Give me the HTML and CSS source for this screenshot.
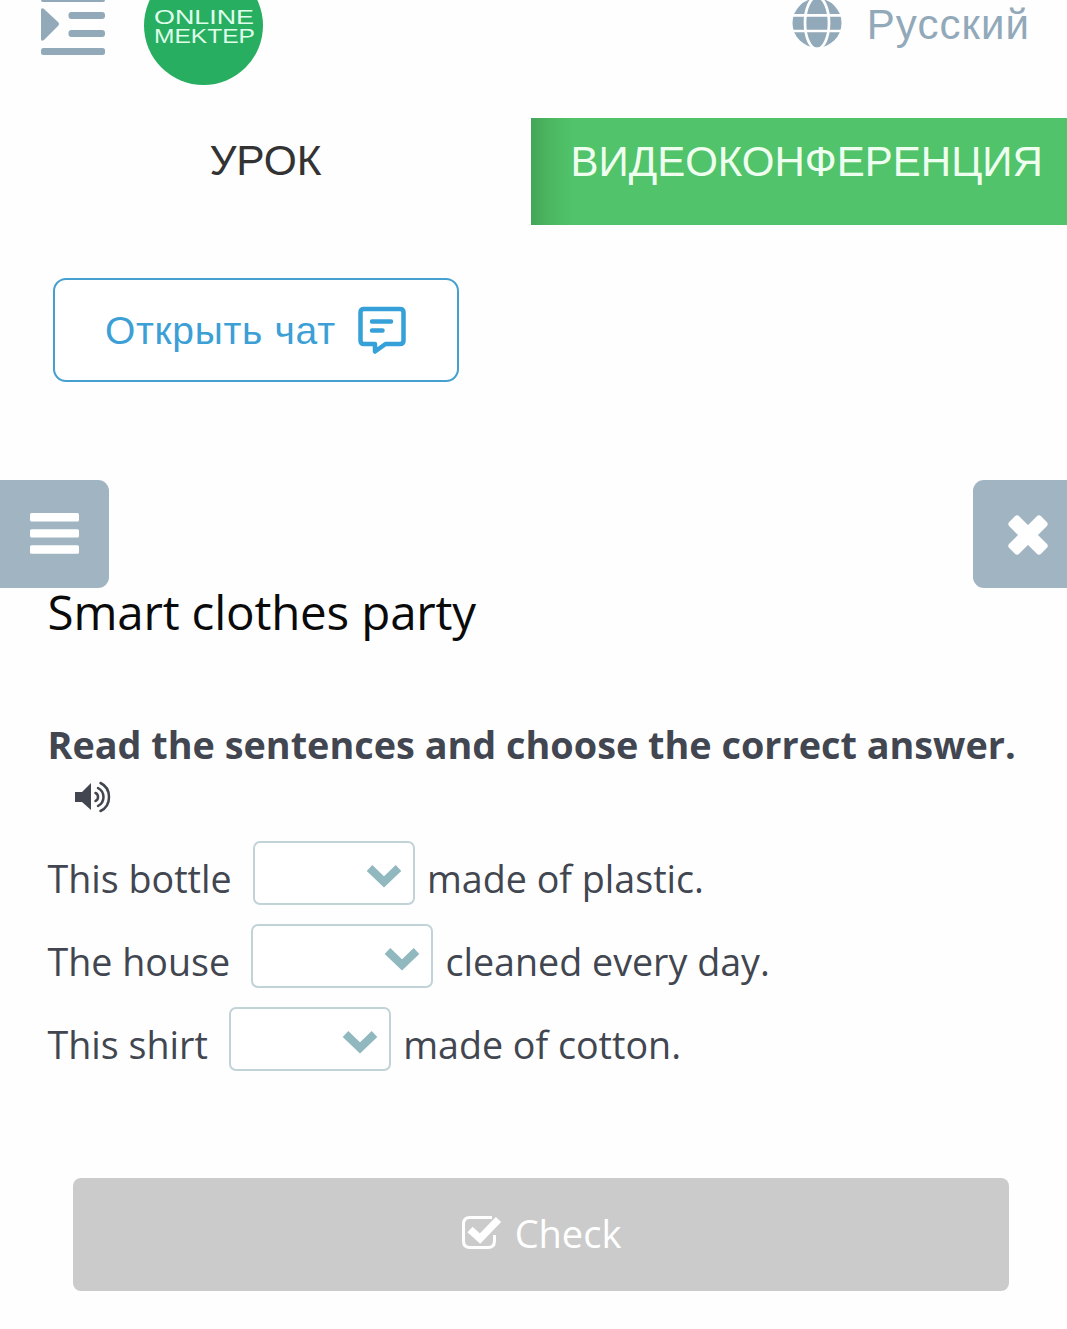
FILE: index.html
```html
<!DOCTYPE html>
<html lang="ru">
<head>
<meta charset="utf-8">
<title>Online Mektep</title>
<link rel="stylesheet" href="styles.css">
</head>
<body>
<header class="header">
  <svg class="indent-icon" width="66" height="56" viewBox="0 0 66 56" fill="#91a9b9">
    <rect x="1" y="-5" width="64" height="7" rx="2"/>
    <path d="M1 10Q1 7 4 9L18 22Q20 24 18 26L4 40Q1 42 1 39Z"/>
    <rect x="28.500" y="12" width="36.500" height="7" rx="3"/>
    <rect x="28.500" y="30" width="36.500" height="7" rx="3"/>
    <rect x="1" y="48" width="64" height="7" rx="2.500"/>
  </svg>
  <svg class="logo" width="120" height="86" viewBox="0 0 120 86">
    <circle cx="59.500" cy="25.500" r="59.500" fill="#28ae60"/>
    <g class="logo-text" fill="#dfffeb">
      <text x="10" y="23.500" textLength="100" lengthAdjust="spacingAndGlyphs">ONLINE</text>
      <text x="10" y="43" textLength="101" lengthAdjust="spacingAndGlyphs">MEKTEP</text>
    </g>
  </svg>
  <div class="language">
    <svg width="50" height="48" viewBox="0 0 50 48">
      <circle cx="25" cy="23" r="24.500" fill="#91a9b9"/>
      <g fill="none" stroke="#fff" stroke-width="2.700">
        <path d="M0 15.300H50M0 31H50"/>
        <ellipse cx="25" cy="23" rx="12" ry="26"/>
      </g>
    </svg>
    <span class="language-name">Русский</span>
  </div>
</header>
<nav class="tabs">
  <a class="tab"><span class="lesson">УРОК</span></a>
  <a class="tab tab-video"><span class="video">ВИДЕОКОНФЕРЕНЦИЯ</span></a>
</nav>
<button class="chat">
  <span class="chat-label">Открыть чат</span>
  <svg width="48" height="48" viewBox="0 0 48 48" fill="none" stroke="#36a0d8" stroke-width="4.500" stroke-linejoin="round" stroke-linecap="round">
    <path d="M6 3H42Q45.500 3 45.500 6.500V34.500Q45.500 38 42 38H27.500L17 45.500V38H6Q2.500 38 2.500 34.500V6.500Q2.500 3 6 3Z"/>
    <path d="M14 15.500H33M14 24.500H24.500"/>
  </svg>
</button>
<div class="side-controls">
  <button class="side menu"><svg width="49" height="42" viewBox="0 0 49 42" fill="#fff"><rect width="49" height="8.500" rx="1.500"/><rect y="16.200" width="49" height="8.300" rx="1.500"/><rect y="32.200" width="49" height="8.500" rx="1.500"/></svg></button>
  <button class="side close"><svg width="40" height="42" viewBox="0 0 40 42" fill="#fff"><rect x="-2.500" y="15" width="45" height="14" rx="3" transform="rotate(45 20 22)"/><rect x="-2.500" y="15" width="45" height="14" rx="3" transform="rotate(-45 20 22)"/></svg></button>
</div>
<main class="lesson-body">
  <h1 class="title"><span>Smart clothes party</span></h1>
  <h2 class="task"><span>Read the sentences and choose the correct answer.</span></h2>
  <svg class="sound" width="37" height="32" viewBox="0 0 37 32">
    <path d="M0 11H7L16 2V29L7 21H0Z" fill="#414650"/>
    <g fill="none" stroke="#414650" stroke-width="2.500" stroke-linecap="round">
      <path d="M20.500 12Q23 13 23 16T20.500 20"/>
      <path d="M23 7Q28.500 10 28.500 16T23 25"/>
      <path d="M25.500 2Q34 6 34 16T25.500 30"/>
    </g>
  </svg>
  <div class="row"><span class="words">This bottle</span><span class="select select-bottle"><svg class="chevron" width="36" height="24" viewBox="0 0 36 24"><path d="M3.500 4L18 18L32.500 4" fill="none" stroke="#91b8bf" stroke-width="8"/></svg></span><span class="words">made of plastic.</span></div>
  <div class="row"><span class="words">The house</span><span class="select select-house"><svg class="chevron" width="36" height="24" viewBox="0 0 36 24"><path d="M3.500 4L18 18L32.500 4" fill="none" stroke="#91b8bf" stroke-width="8"/></svg></span><span class="words">cleaned every day.</span></div>
  <div class="row"><span class="words">This shirt</span><span class="select select-shirt"><svg class="chevron" width="36" height="24" viewBox="0 0 36 24"><path d="M3.500 4L18 18L32.500 4" fill="none" stroke="#91b8bf" stroke-width="8"/></svg></span><span class="words">made of cotton.</span></div>
  <button class="check">
    <svg width="41" height="36" viewBox="0 0 41 36">
      <path d="M31 2.500H9Q2.500 2.500 2.500 9V26Q2.500 32.500 9 32.500H27Q33.500 32.500 33.500 26V20" fill="none" stroke="#fff" stroke-width="3"/>
      <path d="M9 14.500L19 23.500L37.500 4.500" fill="none" stroke="#fff" stroke-width="7.500"/>
    </svg>
    <span>Check</span>
  </button>
</main>
</body>
</html>
```

FILE: styles.css
```css
* { box-sizing: border-box; }
body { margin: 0; height: 1329px; overflow: hidden; background: #fefefe; font-family: "Liberation Sans", Arial, sans-serif; }
button { padding: 0; border: 0; font: inherit; }
svg { display: block; flex: none; }
span { white-space: nowrap; }
.header { display: flex; align-items: flex-start; height: 118px; padding-left: 40px; padding-right: 37px; }
.logo { margin-left: 38px; }
.logo-text { font: 20px "Liberation Sans", sans-serif; }
.language { display: flex; align-items: flex-start; gap: 25px; margin-left: auto; color: #91a9b9; }
.language-name { font-size: 42px; line-height: 50px; letter-spacing: 1.05px; }
.tabs { display: grid; grid-template-columns: 531px 536px; height: 107px; line-height: 86px; text-align: center; }
.lesson { font-size: 42.5px; color: #333; }
.tab-video { background: linear-gradient(90deg, #43a559 0, #4bb760 18px, #51c36a 42px); color: #efffef; line-height: 88px; text-align: left; padding-left: 39.5px; }
.video { font-size: 42px; }
.chat { display: flex; align-items: center; justify-content: space-between; width: 406px; height: 104px; margin: 53px 0 0 53px; padding: 0 51px 0 50px; border: 2px solid #459fcf; border-radius: 13px; background: #fff; color: #3c9fd5; font-size: 39px; }
.chat-label { letter-spacing: 0.7px; padding-top: 2px; }
.side-controls { display: flex; justify-content: space-between; margin-top: 98px; height: 108px; }
.side { display: flex; align-items: center; background: #a0b4c1; }
.menu { width: 109px; padding-left: 30px; border-radius: 0 11px 11px 0; }
.close { width: 94px; padding-left: 35px; border-radius: 11px 0 0 11px; }
.lesson-body { padding-left: 47.5px; color: #414650; font-family: "Open Sans", sans-serif; }
.title { margin: 0; height: 123px; font-size: 47.5px; font-weight: 400; line-height: 48px; letter-spacing: -0.17px; color: #0a0a0a; }
.task { margin: 0; height: 70px; font-size: 37.8px; font-weight: 700; line-height: 67px; }
.sound { margin: 0 0 28px 27.5px; }
.row { display: flex; height: 83px; font-size: 37.65px; }
.words { line-height: 75px; }
.select { display: flex; justify-content: flex-end; height: 64px; border: 2px solid #c2d3d7; border-radius: 7px; margin: 0 12px 0 21.3px; padding: 21px 11px 0 0; background: #fff; }
.select-bottle, .select-shirt { width: 162px; }
.select-house { width: 182px; }
.check { display: flex; align-items: center; justify-content: center; gap: 13px; width: 936px; height: 113px; margin: 88px 0 0 25.5px; padding-bottom: 4px; border-radius: 8px; background: #cbcbcb; color: #fff; font-size: 38px; }
```
